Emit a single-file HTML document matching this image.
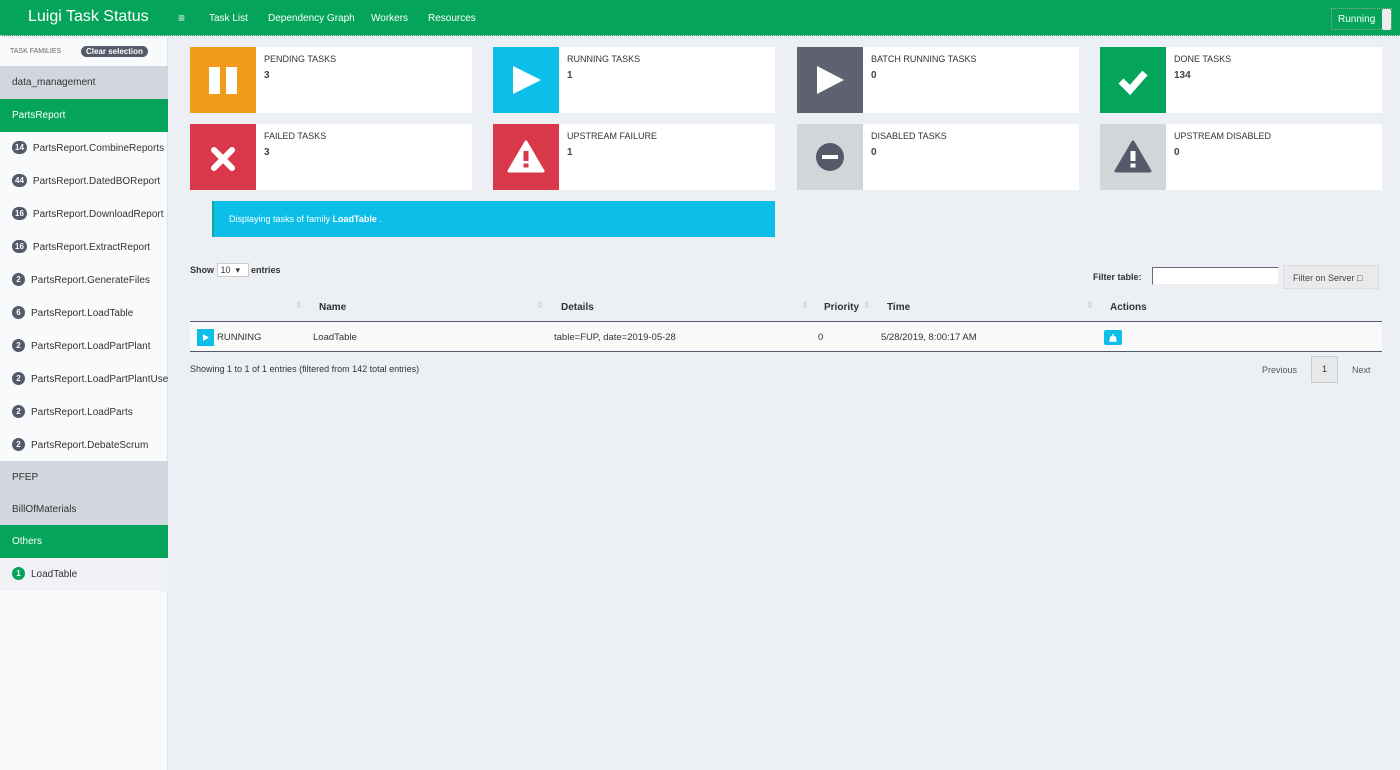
<!DOCTYPE html>
<html><head><meta charset="utf-8"><style>
*{box-sizing:border-box;margin:0;padding:0}
body{width:1400px;height:770px;overflow:hidden;background:#ecf0f5;font-family:"Liberation Sans",sans-serif;color:#333;position:relative;font-size:10px}
.hdr{position:absolute;left:0;top:0;width:1400px;height:36px;background:#04a45a;border-bottom:1px dotted #ccc;color:#fff}
.hdr .t{position:absolute;left:28px;top:8px;font-size:16px}
.hdr .n{position:absolute;top:13px;font-size:10px}
.run{position:absolute;left:1331px;top:8px;width:61px;height:22px;border:1px dotted #9a8;}
.run span{position:absolute;left:6px;top:5px;font-size:10px}
.run i{position:absolute;right:0;top:0;width:9px;height:21px;background:#eee;border-radius:2px}
.side{position:absolute;left:0;top:37px;width:168px;height:733px;background:#f9fafc;border-right:1px solid #e0e4e8}
.si{position:absolute;left:0;width:168px;height:33px;font-size:10px;line-height:33px;padding-left:12px;white-space:nowrap;overflow:hidden;color:#333}
.g{background:#d2d6de}.gr{background:#04a45a;color:#fff}
.b{display:inline-block;background:#555a6a;color:#fff;border-radius:7px;font-size:8px;font-weight:bold;line-height:13px;height:13px;min-width:13px;text-align:center;padding:0 3px;margin-right:6px;vertical-align:middle;position:relative;top:-1px}
.box{position:absolute;width:282px;height:66px;background:#fff}
.box .ic{position:absolute;left:0;top:0;width:66px;height:66px}
.box .l{position:absolute;left:74px;top:7px;font-size:9px;color:#333}
.box .v{position:absolute;left:74px;top:23px;font-size:10px;font-weight:bold;color:#444}
.ic svg{position:absolute;left:0;top:0}
.th{position:absolute;top:302px;font-size:10px;font-weight:bold;color:#333}
.sa{position:absolute;top:300px;color:#ccc;font-size:9px}
</style></head><body>
<div class="hdr"><div class="t">Luigi Task Status</div>
<div class="n" style="left:178px;top:11px;font-size:12px">&#8801;</div>
<div class="n" style="left:209px">Task List</div><div class="n" style="left:268px">Dependency Graph</div><div class="n" style="left:371px">Workers</div><div class="n" style="left:428px">Resources</div>
<div class="run"><span>Running</span><i></i></div></div>
<div class="side">
<div style="position:absolute;left:10px;top:11px;font-size:7px;color:#666">TASK FAMILIES</div>
<div style="position:absolute;left:81px;top:9px;background:#555a6a;color:#fff;font-size:8px;font-weight:bold;border-radius:7px;padding:1px 5px">Clear selection</div>
<div class="si g" style="top:29px">data_management</div>
<div class="si gr" style="top:62px">PartsReport</div>
<div class="si" style="top:95px"><span class="b">14</span>PartsReport.CombineReports</div>
<div class="si" style="top:128px"><span class="b">44</span>PartsReport.DatedBOReport</div>
<div class="si" style="top:161px"><span class="b">16</span>PartsReport.DownloadReport</div>
<div class="si" style="top:194px"><span class="b">16</span>PartsReport.ExtractReport</div>
<div class="si" style="top:227px"><span class="b">2</span>PartsReport.GenerateFiles</div>
<div class="si" style="top:260px"><span class="b">6</span>PartsReport.LoadTable</div>
<div class="si" style="top:293px"><span class="b">2</span>PartsReport.LoadPartPlant</div>
<div class="si" style="top:326px"><span class="b">2</span>PartsReport.LoadPartPlantUse</div>
<div class="si" style="top:359px"><span class="b">2</span>PartsReport.LoadParts</div>
<div class="si" style="top:392px"><span class="b">2</span>PartsReport.DebateScrum</div>
<div class="si g" style="top:424px">PFEP</div>
<div class="si g" style="top:456px">BillOfMaterials</div>
<div class="si gr" style="top:488px">Others</div>
<div class="si" style="top:521px;background:#f0f2f5"><span class="b" style="background:#04a45a">1</span>LoadTable</div>
</div>

<div class="box" style="left:190px;top:47px"><div class="ic" style="background:#f09c1a"><svg width="66" height="66"><rect x="19" y="20" width="11" height="27" fill="#fff"/><rect x="36" y="20" width="11" height="27" fill="#fff"/></svg></div><div class="l">PENDING TASKS</div><div class="v">3</div></div>
<div class="box" style="left:493px;top:47px"><div class="ic" style="background:#0bbfe9"><svg width="66" height="66"><polygon points="20,19 48,33 20,47" fill="#fff"/></svg></div><div class="l">RUNNING TASKS</div><div class="v">1</div></div>
<div class="box" style="left:797px;top:47px"><div class="ic" style="background:#5f6070"><svg width="66" height="66"><polygon points="20,19 47,33 20,47" fill="#fff"/></svg></div><div class="l">BATCH RUNNING TASKS</div><div class="v">0</div></div>
<div class="box" style="left:1100px;top:47px"><div class="ic" style="background:#04a45a"><svg width="66" height="66"><polyline points="21,34 30,43 45,26" fill="none" stroke="#fff" stroke-width="7"/></svg></div><div class="l">DONE TASKS</div><div class="v">134</div></div>
<div class="box" style="left:190px;top:124px"><div class="ic" style="background:#d9384a"><svg width="66" height="66"><path d="M24 26L42 44M42 26L24 44" stroke="#fff" stroke-width="6" stroke-linecap="round"/></svg></div><div class="l">FAILED TASKS</div><div class="v">3</div></div>
<div class="box" style="left:493px;top:124px"><div class="ic" style="background:#d9384a"><svg width="66" height="66"><polygon points="33,18 50,47 16,47" fill="#fff" stroke="#fff" stroke-width="3" stroke-linejoin="round"/><rect x="30.5" y="27" width="5" height="10" fill="#d9384a"/><rect x="30.5" y="39.5" width="5" height="4" fill="#d9384a"/></svg></div><div class="l">UPSTREAM FAILURE</div><div class="v">1</div></div>
<div class="box" style="left:797px;top:124px"><div class="ic" style="background:#d2d6d8"><svg width="66" height="66"><circle cx="33" cy="33" r="14" fill="#555a6a"/><rect x="25" y="31" width="16" height="4" fill="#fff"/></svg></div><div class="l">DISABLED TASKS</div><div class="v">0</div></div>
<div class="box" style="left:1100px;top:124px"><div class="ic" style="background:#d2d6d8"><svg width="66" height="66"><polygon points="33,18 50,47 16,47" fill="#555a6a" stroke="#555a6a" stroke-width="3" stroke-linejoin="round"/><rect x="30.5" y="27" width="5" height="10" fill="#fff"/><rect x="30.5" y="39.5" width="5" height="4" fill="#fff"/></svg></div><div class="l">UPSTREAM DISABLED</div><div class="v">0</div></div>

<div style="position:absolute;left:212px;top:201px;width:563px;height:36px;background:#0bbfe9;color:#fff;font-size:9px;padding:13px 0 0 15px;border-left:2px solid #1a9">Displaying tasks of family <b>LoadTable</b> .</div>

<div style="position:absolute;left:190px;top:263px;font-size:9px;font-weight:bold">Show <span style="display:inline-block;width:32px;height:14px;background:#fff;border:1px solid #ccc;font-weight:normal;padding-left:3px;line-height:12px">10 &nbsp;&#9662;</span> entries</div>
<div style="position:absolute;left:1093px;top:272px;font-size:9px;font-weight:bold">Filter table:</div>
<div style="position:absolute;left:1152px;top:267px;width:127px;height:18px;background:#fff;border:1px solid #666;border-color:#667 #eee #eee #667"></div>
<div style="position:absolute;left:1283px;top:265px;width:96px;height:24px;background:#e8eaec;border:1px solid #ddd;font-size:9px;padding:7px 0 0 9px;color:#444">Filter on Server &#9633;</div>

<div class="sa" style="left:295px">&#8661;</div><div class="sa" style="left:536px">&#8661;</div><div class="sa" style="left:801px">&#8661;</div><div class="sa" style="left:863px">&#8661;</div><div class="sa" style="left:1086px">&#8661;</div>
<div class="th" style="left:319px">Name</div><div class="th" style="left:561px">Details</div><div class="th" style="left:824px">Priority</div><div class="th" style="left:887px">Time</div><div class="th" style="left:1110px">Actions</div>
<div style="position:absolute;left:190px;top:321px;width:1192px;height:1px;background:#555a6a"></div>
<div style="position:absolute;left:190px;top:322px;width:1192px;height:30px;background:#f9f9f9;border-bottom:1px solid #555a6a"></div>
<div style="position:absolute;left:197px;top:329px;width:17px;height:17px;background:#0bbfe9"><svg width="17" height="17"><polygon points="6,5 12,8.5 6,12" fill="#fff"/></svg></div>
<div style="position:absolute;left:217px;top:332px;font-size:9.5px">RUNNING</div>
<div style="position:absolute;left:313px;top:332px;font-size:9.5px">LoadTable</div>
<div style="position:absolute;left:554px;top:332px;font-size:9.5px">table=FUP, date=2019-05-28</div>
<div style="position:absolute;left:818px;top:332px;font-size:9.5px">0</div>
<div style="position:absolute;left:881px;top:332px;font-size:9.5px">5/28/2019, 8:00:17 AM</div>
<div style="position:absolute;left:1104px;top:330px;width:18px;height:15px;background:#0bbfe9;border-radius:2px"><svg width="18" height="15"><path d="M6 11h6l-1-4h-4z M9 4v3" stroke="#fff" fill="#fff" stroke-width="1.5"/></svg></div>
<div style="position:absolute;left:190px;top:364px;font-size:9px">Showing 1 to 1 of 1 entries (filtered from 142 total entries)</div>
<div style="position:absolute;left:1262px;top:365px;font-size:9px;color:#555">Previous</div>
<div style="position:absolute;left:1311px;top:356px;width:27px;height:27px;background:#e6e8ea;border:1px solid #ccc;text-align:center;line-height:25px;font-size:9px">1</div>
<div style="position:absolute;left:1352px;top:365px;font-size:9px;color:#555">Next</div>
</body></html>
